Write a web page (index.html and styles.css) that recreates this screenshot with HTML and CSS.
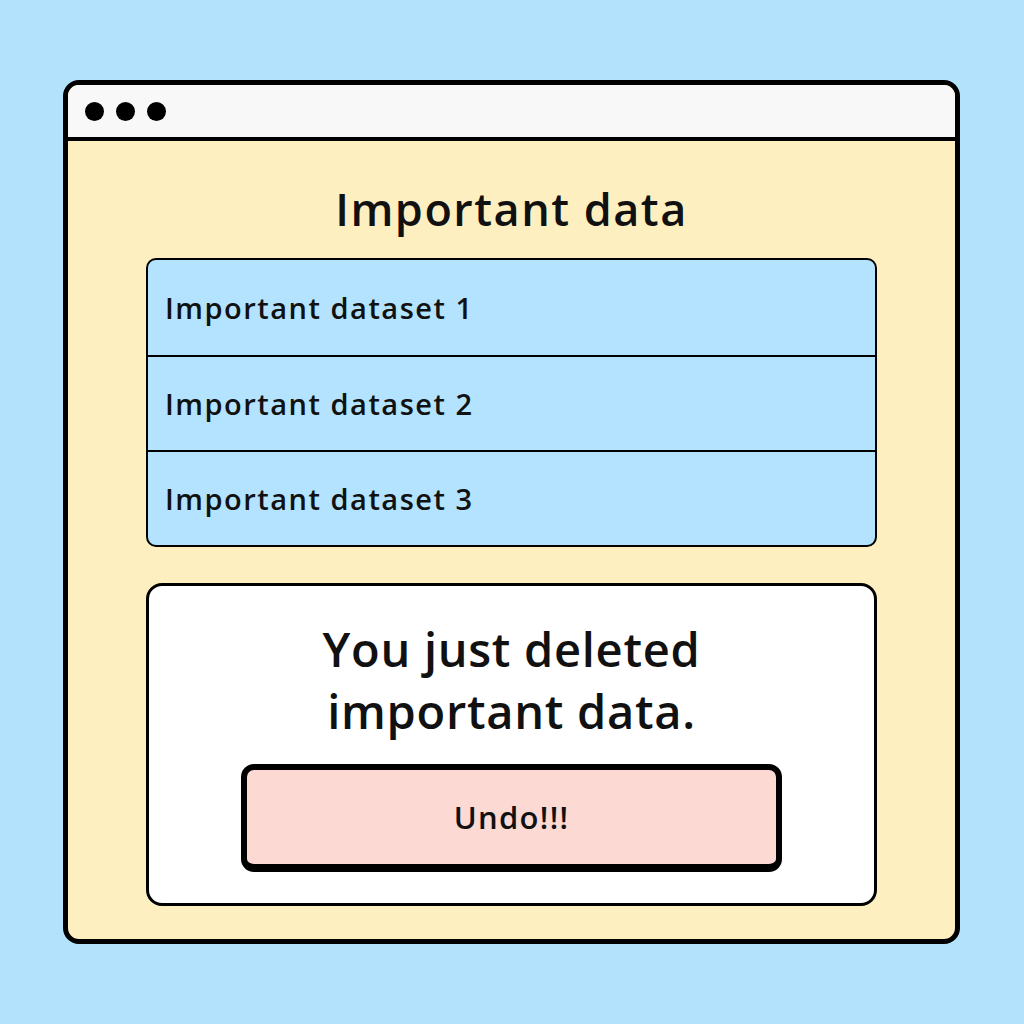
FILE: index.html
```html
<!DOCTYPE html>
<html lang="en">
<head>
  <meta charset="UTF-8">
  <meta name="viewport" content="width=device-width, initial-scale=1.0">
  <title>Important data</title>
  <link rel="stylesheet" href="styles.css">
</head>
<body>
  <div class="wrap">
    <div class="window">
      <div class="titlebar">
        <span class="dot"></span>
        <span class="dot"></span>
        <span class="dot"></span>
      </div>
      <div class="content">
        <h1 class="title">Important data</h1>
        <ul class="list">
          <li class="row">Important dataset 1</li>
          <li class="row">Important dataset 2</li>
          <li class="row">Important dataset 3</li>
        </ul>
        <div class="dialog">
          <p class="msg">You just deleted<br>important data.</p>
          <button class="undo">Undo!!!</button>
        </div>
      </div>
    </div>
  </div>
</body>
</html>
```

FILE: styles.css
```css
html, body{
  width: 100%;
  height: 100%;
  margin: 0;
  padding: 0;
  box-sizing: border-box;
}
*{
  box-sizing: border-box;
}
body{
  background-color: #b3e2fd;
  font-family: "Open Sans", "Noto Sans", sans-serif;
  color: #111;
}
.wrap{
  padding: 80px 0 0 63px;
}
.window{
  width: 897px;
  height: 864px;
  border: 5px solid #000;
  border-radius: 16px;
  background-color: #fdefc0;
  overflow: hidden;
  display: flex;
  flex-direction: column;
}
.titlebar{
  height: 56px;
  background-color: #f8f8f8;
  border-bottom: 4px solid #000;
  display: flex;
  align-items: center;
  gap: 12px;
  padding-left: 17px;
  flex-shrink: 0;
}
.dot{
  width: 19px;
  height: 19px;
  border-radius: 50%;
  background-color: #000;
}
.content{
  display: flex;
  flex-direction: column;
  align-items: center;
  padding-top: 42px;
}
.title{
  margin: 0;
  font-size: 45px;
  font-weight: 600;
  line-height: 52px;
  letter-spacing: 1.5px;
}
.list{
  list-style: none;
  margin: 23px 0 0;
  padding: 0;
  width: 731px;
  border: 2.5px solid #000;
  border-radius: 10px;
  background-color: #b3e3fe;
  overflow: hidden;
}
.row{
  height: 95px;
  display: flex;
  align-items: center;
  padding-left: 17px;
  font-size: 29px;
  font-weight: 600;
  letter-spacing: 1.5px;
}
.row + .row{
  border-top: 2.5px solid #000;
}
.dialog{
  margin-top: 36px;
  width: 731px;
  height: 323px;
  background-color: #fff;
  border: 3px solid #000;
  border-radius: 16px;
  display: flex;
  flex-direction: column;
  align-items: center;
  padding-top: 32px;
}
.msg{
  margin: 0;
  text-align: center;
  font-size: 47px;
  font-weight: 600;
  line-height: 62px;
  letter-spacing: 0.7px;
}
.undo{
  margin-top: 22px;
  width: 541px;
  height: 108px;
  border: 6px solid #000;
  border-bottom-width: 8px;
  border-radius: 13px;
  background-color: #fdd9d3;
  font-family: inherit;
  font-size: 31px;
  font-weight: 600;
  color: #111;
  letter-spacing: 1.3px;
}
```
